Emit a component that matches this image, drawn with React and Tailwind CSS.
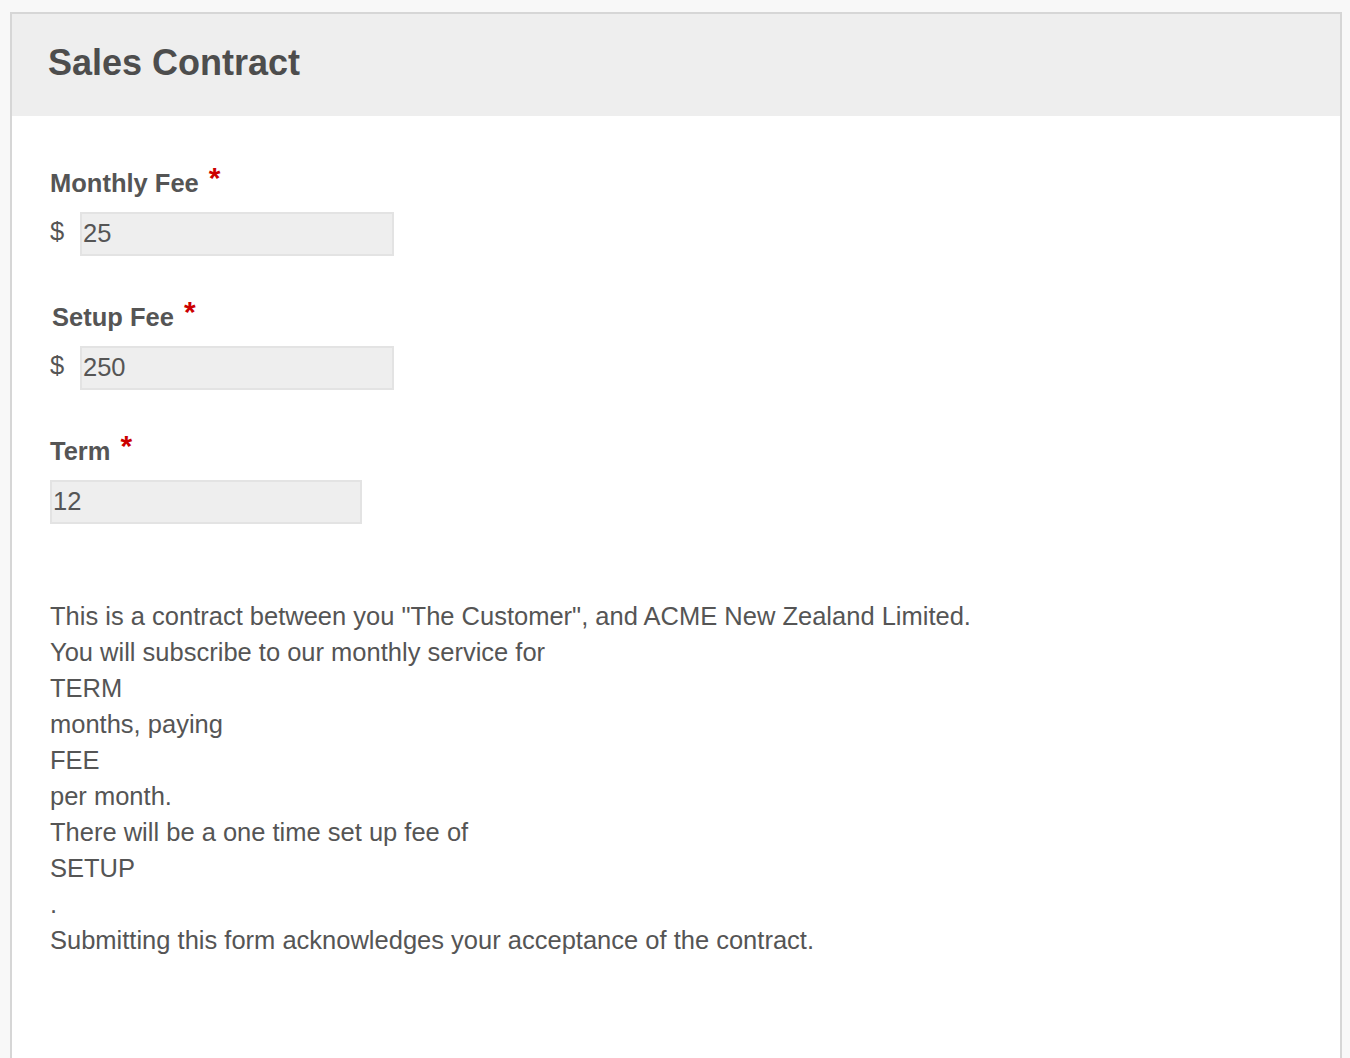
import React from 'react'

const fields = [
    { label: 'Monthly Fee', value: '25', prefix: true },
    { label: 'Setup Fee', value: '250', prefix: true, nudge: true },
    { label: 'Term', value: '12', prefix: false },
]

const lines = [
    'This is a contract between you "The Customer", and ACME New Zealand Limited.',
    'You will subscribe to our monthly service for',
    'TERM',
    'months, paying',
    'FEE',
    'per month.',
    'There will be a one time set up fee of',
    'SETUP',
    '.',
    'Submitting this form acknowledges your acceptance of the contract.',
]

function Field({ label, value, prefix, nudge }) {
    return (
        <div className="mb-[43px]">
            <div className={`leading-[36px] text-[25.5px] font-bold text-[#555] ${nudge ? 'pl-[2px]' : ''}`}>
                {label}
                <span className="ml-[10px] text-[30px] leading-[0] relative top-[-4px] text-[#cc0000] font-bold">*</span>
            </div>
            <div className="mt-[11px] flex items-center">
                {prefix && <span className="w-[30px] text-[25.5px] text-[#555] relative top-[-3px]">$</span>}
                <input
                    readOnly
                    value={value}
                    className={`h-[44px] ${prefix ? 'w-[314px]' : 'w-[312px]'} border-2 border-[#e3e3e3] bg-[#eeeeee] pl-[1px] pb-[2px] text-[25.5px] text-[#555] outline-none`}
                    style={{ fontFamily: '"Liberation Sans", Arial, sans-serif' }}
                />
            </div>
        </div>
    )
}

function App() {
    return (
        <div className="min-h-screen bg-[#f8f8f8] pt-[12px] pl-[10px]" style={{ fontFamily: '"Liberation Sans", Arial, sans-serif' }}>
            <div className="w-[1332px] min-h-[1080px] border-2 border-[#d6d6d6] bg-white">
                <div className="h-[102px] bg-[#eeeeee] pl-[36px] pt-[31px]">
                    <h1 className="text-[36px] leading-[36px] font-bold text-[#4d4d4d]">Sales Contract</h1>
                </div>

                <div className="pl-[38px] pt-[49px]">
                    {fields.map((f) => (
                        <Field key={f.label} {...f} />
                    ))}

                    <div className="mt-[74px] text-[25.5px] leading-[36px] text-[#555]">
                        {lines.map((l, i) => (
                            <div key={i}>{l}</div>
                        ))}
                    </div>
                </div>
            </div>
        </div>
    )
}

export default App
